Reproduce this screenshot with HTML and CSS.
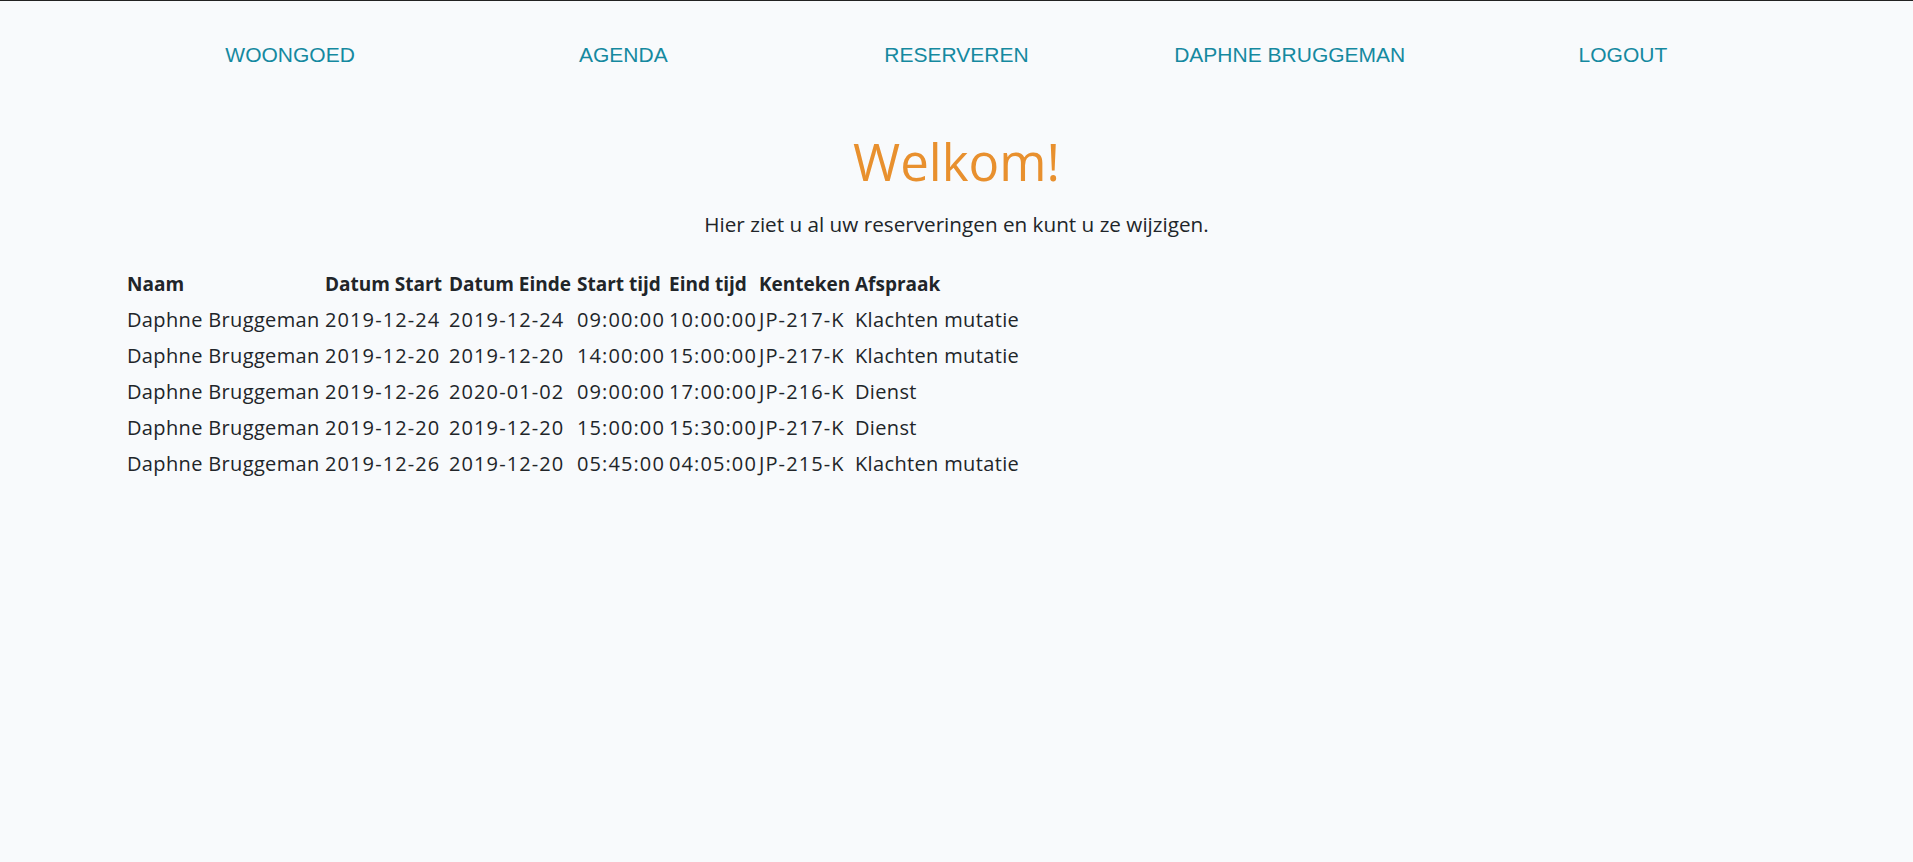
FILE: index.html
```html
<!DOCTYPE html>
<html lang="nl">
<head>
<meta charset="utf-8">
<title>Woongoed - Reserveringen</title>
<link rel="stylesheet" href="styles.css">
</head>
<body>
<nav class="nav">
  <a class="nav-link" href="#">WOONGOED</a>
  <a class="nav-link" href="#">AGENDA</a>
  <a class="nav-link" href="#">RESERVEREN</a>
  <a class="nav-link" href="#">DAPHNE BRUGGEMAN</a>
  <a class="nav-link" href="#">LOGOUT</a>
</nav>
<main class="content">
  <h1 class="title">Welkom!</h1>
  <p class="intro">Hier ziet u al uw reserveringen en kunt u ze wijzigen.</p>
  <table class="res-table">
    <colgroup>
      <col class="c-naam"><col class="c-dstart"><col class="c-deinde"><col class="c-tstart"><col class="c-teind"><col class="c-kenteken"><col class="c-afspraak">
    </colgroup>
    <thead>
      <tr><th>Naam</th><th>Datum Start</th><th>Datum Einde</th><th>Start tijd</th><th>Eind tijd</th><th>Kenteken</th><th>Afspraak</th></tr>
    </thead>
    <tbody>
      <tr><td>Daphne Bruggeman</td><td class="num">2019-12-24</td><td class="num">2019-12-24</td><td class="num">09:00:00</td><td class="num">10:00:00</td><td class="num">JP-217-K</td><td>Klachten mutatie</td></tr>
      <tr><td>Daphne Bruggeman</td><td class="num">2019-12-20</td><td class="num">2019-12-20</td><td class="num">14:00:00</td><td class="num">15:00:00</td><td class="num">JP-217-K</td><td>Klachten mutatie</td></tr>
      <tr><td>Daphne Bruggeman</td><td class="num">2019-12-26</td><td class="num">2020-01-02</td><td class="num">09:00:00</td><td class="num">17:00:00</td><td class="num">JP-216-K</td><td>Dienst</td></tr>
      <tr><td>Daphne Bruggeman</td><td class="num">2019-12-20</td><td class="num">2019-12-20</td><td class="num">15:00:00</td><td class="num">15:30:00</td><td class="num">JP-217-K</td><td>Dienst</td></tr>
      <tr><td>Daphne Bruggeman</td><td class="num">2019-12-26</td><td class="num">2019-12-20</td><td class="num">05:45:00</td><td class="num">04:05:00</td><td class="num">JP-215-K</td><td>Klachten mutatie</td></tr>
    </tbody>
  </table>
</main>
</body>
</html>
```
FILE: styles.css
```css
html, body {
  height: 100%;
}
body {
  margin: 0;
  border-top: 1px solid #222222;
  background: #f8fafc;
  color: #212529;
  font-family: "Open Sans", "Noto Sans", sans-serif;
  box-sizing: border-box;
}
.nav {
  display: flex;
  width: 1666px;
  margin: 42px auto 0;
}
.nav-link {
  flex: 1;
  text-align: center;
  font-family: "Liberation Sans", Arial, sans-serif;
  font-size: 21px;
  line-height: 24px;
  color: #1589a0;
  text-decoration: none;
}
.content {
  display: flex;
  flex-direction: column;
}
.title {
  margin: 64px 0 0;
  text-align: center;
  font-size: 51px;
  line-height: 61px;
  font-weight: 400;
  color: #e8902e;
}
.intro {
  margin: 16px 0 0;
  text-align: center;
  font-size: 20.7px;
  line-height: 32px;
}
.res-table {
  margin: 26px 0 0 127px;
  border-collapse: collapse;
  table-layout: fixed;
  width: 900px;
}
.c-naam { width: 198px; }
.c-dstart { width: 124px; }
.c-deinde { width: 128px; }
.c-tstart { width: 92px; }
.c-teind { width: 90px; }
.c-kenteken { width: 96px; }
.c-afspraak { width: 172px; }
.res-table th,
.res-table td {
  padding: 0;
  height: 36px;
  line-height: 36px;
  text-align: left;
  white-space: nowrap;
  vertical-align: middle;
}
.res-table th {
  font-size: 19px;
  font-weight: 700;
}
.res-table td {
  font-size: 20px;
  letter-spacing: 0.35px;
}
.res-table td.num {
  letter-spacing: 1.1px;
}
```
